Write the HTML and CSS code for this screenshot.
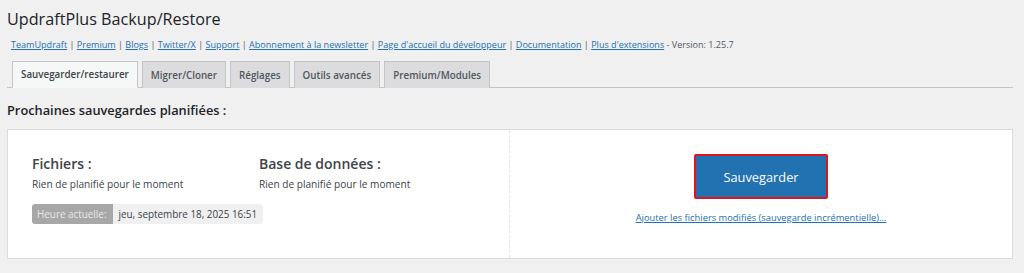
FILE: index.html
```html
<!DOCTYPE html>
<html lang="fr">
<head>
<meta charset="utf-8">
<title>UpdraftPlus Backup/Restore</title>
<link rel="stylesheet" href="styles.css">
</head>
<body>
<div class="wrap">
  <h1 class="title">UpdraftPlus Backup/Restore</h1>
  <p class="links">
    <a href="#">TeamUpdraft</a> | <a href="#">Premium</a> | <a href="#">Blogs</a> | <a href="#">Twitter/X</a> | <a href="#">Support</a> | <a href="#">Abonnement à la newsletter</a> | <a href="#">Page d'accueil du développeur</a> | <a href="#">Documentation</a> | <a href="#">Plus d'extensions</a> - Version: 1.25.7
  </p>
  <nav class="tabs">
    <a class="tab active" href="#">Sauvegarder/restaurer</a>
    <a class="tab" href="#">Migrer/Cloner</a>
    <a class="tab" href="#">Réglages</a>
    <a class="tab" href="#">Outils avancés</a>
    <a class="tab" href="#">Premium/Modules</a>
  </nav>
  <h2 class="section-title">Prochaines sauvegardes planifiées :</h2>
  <div class="box">
    <div class="box-left">
      <div class="cols">
        <div class="col">
          <h3 class="col-title">Fichiers :</h3>
          <p class="col-text">Rien de planifié pour le moment</p>
        </div>
        <div class="col">
          <h3 class="col-title">Base de données :</h3>
          <p class="col-text">Rien de planifié pour le moment</p>
        </div>
      </div>
      <div class="time"><span class="time-label">Heure actuelle:</span><span class="time-value">jeu, septembre 18, 2025 16:51</span></div>
    </div>
    <div class="box-right">
      <button class="backup-btn">Sauvegarder</button>
      <a class="incr" href="#">Ajouter les fichiers modifiés (sauvegarde incrémentielle)...</a>
    </div>
  </div>
</div>
</body>
</html>
```
FILE: styles.css
```css
html, body {
  margin: 0;
  padding: 0;
  background: #f0f0f1;
  font-family: "Open Sans", "Noto Sans", sans-serif;
  color: #3c434a;
}
.wrap {
  padding: 6px 11px 0 7px;
}
.title {
  margin: 0;
  font-size: 16.2px;
  font-weight: 400;
  line-height: 26px;
  color: #1d2327;
}
.links {
  margin: 6px 0 0 4px;
  font-size: 9.05px;
  line-height: 14px;
  color: #50575e;
}
.links a {
  color: #2271b1;
  text-decoration: underline;
}
.tabs {
  display: flex;
  gap: 4px;
  margin-top: 9px;
  padding-left: 5px;
  border-bottom: 1px solid #c3c4c7;
  height: 26px;
  align-items: flex-end;
}
.tab {
  box-sizing: border-box;
  height: 27px;
  margin-bottom: -1px;
  padding: 0 8px;
  display: flex;
  align-items: center;
  font-size: 9.8px;
  font-weight: 600;
  color: #50575e;
  background: #dcdcde;
  border: 1px solid #c3c4c7;
  border-bottom: none;
  text-decoration: none;
}
.tab.active {
  background: #f6f7f7;
  color: #3c434a;
  border-bottom: 1px solid #f6f7f7;
}
.section-title {
  margin: 13px 0 0;
  font-size: 12.8px;
  font-weight: 600;
  line-height: 18px;
  color: #1d2327;
}
.box {
  margin-top: 10px;
  display: flex;
  background: #fff;
  border: 1px solid #dcdcde;
  height: 130px;
  box-sizing: border-box;
}
.box-left {
  width: 502px;
  padding: 24px 0 0 24px;
  box-sizing: border-box;
  border-right: 1px dashed #e4e4e4;
}
.cols {
  display: flex;
}
.col {
  width: 227px;
}
.col-title {
  margin: 0;
  font-size: 14px;
  font-weight: 600;
  line-height: 20px;
  color: #3c434a;
}
.col-text {
  margin: 3px 0 0;
  font-size: 10.1px;
  line-height: 14px;
  color: #3c434a;
}
.time {
  margin-top: 13px;
  display: inline-flex;
  font-size: 9.9px;
  line-height: 20px;
  border-radius: 3px;
  overflow: hidden;
}
.time-label {
  background: #a7a7a7;
  color: #e8e8e8;
  padding: 0 6px 0 5px;
}
.time-value {
  background: #f0f0f0;
  color: #3c434a;
  padding: 0 6px 0 6px;
}
.box-right {
  flex: 1;
  display: flex;
  flex-direction: column;
  align-items: center;
  padding-top: 24px;
}
.backup-btn {
  width: 134px;
  height: 45px;
  background: #2271b1;
  color: #fff;
  border: 2px solid #e0141e;
  border-radius: 2px;
  font-family: inherit;
  font-size: 12.8px;
  cursor: pointer;
}
.incr {
  margin-top: 12px;
  font-size: 9.35px;
  color: #2271b1;
  text-decoration: underline;
}
```
